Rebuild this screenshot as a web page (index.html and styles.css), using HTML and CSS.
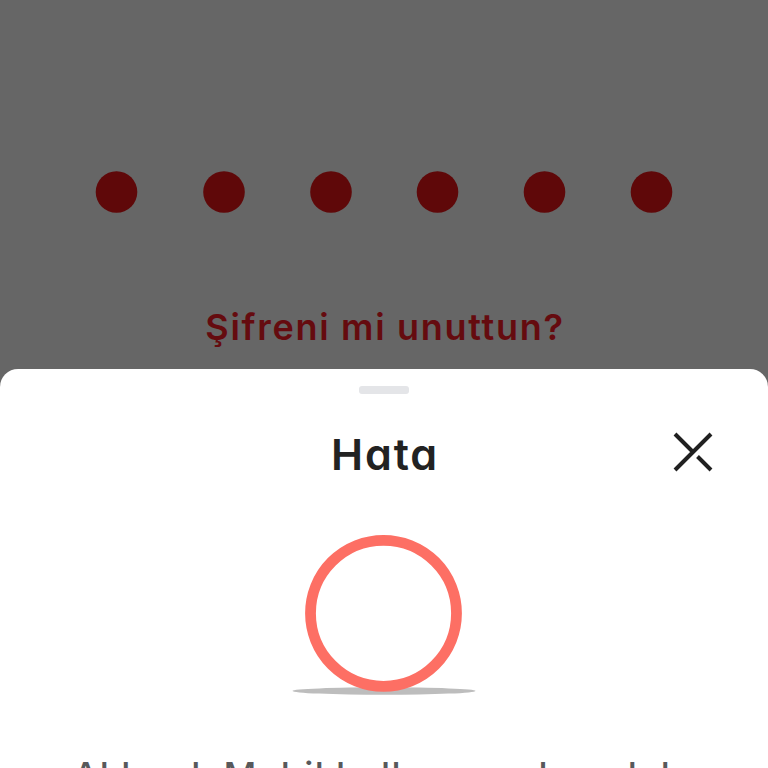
FILE: index.html
```html
<!DOCTYPE html>
<html lang="tr">
<head>
<meta charset="utf-8">
<meta name="viewport" content="width=device-width, initial-scale=1">
<title>Hata</title>
<link rel="stylesheet" href="styles.css">
</head>
<body>
<main class="screen">
  <section class="login">
    <svg class="pin" viewBox="0 0 578 42" fill="#5f0809"><circle cx="21.500" cy="21" r="20.800"/><circle cx="129" cy="21" r="20.800"/><circle cx="236" cy="21" r="20.800"/><circle cx="342.500" cy="21" r="20.800"/><circle cx="449.500" cy="21" r="20.800"/><circle cx="556.500" cy="21" r="20.800"/></svg>
    <a class="forgot">Şifreni mi unuttun?</a>
  </section>
  <section class="sheet">
    <div class="handle"></div>
    <header class="header">
      <h1 class="title">Hata</h1>
      <svg class="close" viewBox="0 0 40 40" aria-label="Kapat"><path d="M2 38 38 2M2 2 19 19M24.500 24.500 38 38"/></svg>
    </header>
    <svg class="art" viewBox="0 0 184 162"><ellipse cx="92" cy="157" rx="91.500" ry="3.700" fill="#bdbdbd"/><circle cx="91.500" cy="79.300" r="73" fill="#fff" stroke="#fd6f64" stroke-width="10.800"/></svg>
    <p class="message">Akbank Mobil <span class="loose">kullanımın</span> <span class="tight">kapalıdır</span></p>
  </section>
</main>
</body>
</html>
```
FILE: styles.css
```css
* { box-sizing: border-box; }
body { margin: 0; background: #666; overflow: hidden; }
.screen {
  width: 768px;
  height: 768px;
  overflow: hidden;
  display: flex;
  flex-direction: column;
  background: #666;
  font-family: Inter, "Open Sans", sans-serif;
  font-feature-settings: "cv11" 1;
}
.login {
  height: 369px;
  flex: none;
  padding-top: 171px;
  display: flex;
  flex-direction: column;
  align-items: center;
}
.pin { width: 578px; height: 42px; flex: none; }
.forgot {
  margin-top: 92px;
  padding-left: 2px;
  font-size: 36px;
  line-height: 44px;
  font-weight: 600;
  letter-spacing: 1.7px;
  color: #650b0f;
  white-space: nowrap;
}
.sheet {
  height: 399px;
  flex: none;
  background: #fff;
  border-radius: 18px 18px 0 0;
  padding-top: 17px;
  display: flex;
  flex-direction: column;
  align-items: center;
  overflow: hidden;
}
.handle { width: 50px; height: 8px; border-radius: 3px; background: #e4e5e8; flex: none; }
.header {
  width: 100%;
  height: 60px;
  margin-top: 30px;
  padding: 0 55px;
  display: grid;
  grid-template-columns: 40px 1fr 40px;
  align-items: center;
  flex: none;
}
.title {
  grid-column: 2;
  margin: 0;
  padding-left: 2px;
  text-align: center;
  font-size: 43px;
  line-height: 60px;
  font-weight: 600;
  letter-spacing: 1.9px;
  color: #222;
}
.close {
  width: 40px;
  height: 40px;
  margin-top: -4px;
  fill: none;
  stroke: #202020;
  stroke-width: 4;
}
.art { width: 184px; height: 162px; margin-top: 50px; flex: none; }
.message {
  margin: 55px 0 0;
  font-size: 36px;
  line-height: 48px;
  font-weight: 500;
  letter-spacing: 1.3px;
  color: #58595b;
  white-space: nowrap;
}
.loose { letter-spacing: 1.6px; }
.tight { letter-spacing: 0.8px; }
```
